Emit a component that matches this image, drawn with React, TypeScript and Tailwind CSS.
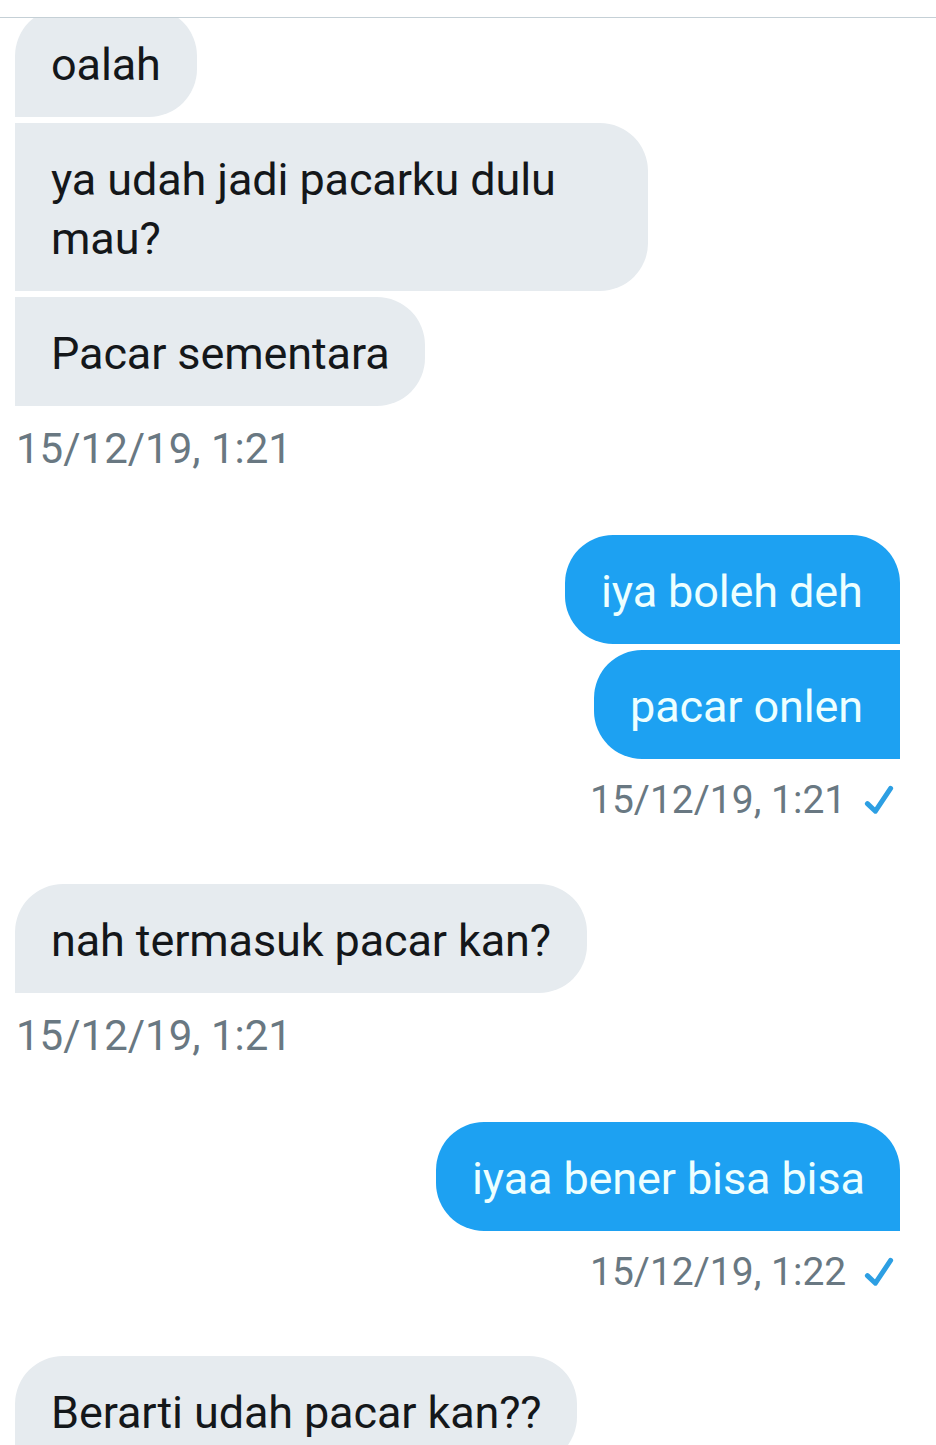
import React from 'react';

type Side = 'in' | 'out';

interface Bubble {
  lines: string[];
  shape: string;
}

interface MessageGroup {
  id: number;
  side: Side;
  bubbles: Bubble[];
  time?: string;
}

const GROUPS: MessageGroup[] = [
  {
    id: 1,
    side: 'in',
    bubbles: [
      { lines: ['oalah'], shape: 'w-[182px] rounded-t-[48px] rounded-br-[48px]' },
      { lines: ['ya udah jadi pacarku dulu', 'mau?'], shape: 'w-[633px] rounded-r-[48px]' },
      { lines: ['Pacar sementara'], shape: 'w-[410px] rounded-r-[48px]' },
    ],
    time: '15/12/19, 1:21',
  },
  {
    id: 2,
    side: 'out',
    bubbles: [
      { lines: ['iya boleh deh'], shape: 'w-[335px] rounded-t-[48px] rounded-bl-[48px]' },
      { lines: ['pacar onlen'], shape: 'w-[306px] rounded-l-[48px]' },
    ],
    time: '15/12/19, 1:21',
  },
  {
    id: 3,
    side: 'in',
    bubbles: [
      { lines: ['nah termasuk pacar kan?'], shape: 'w-[572px] rounded-t-[48px] rounded-br-[48px]' },
    ],
    time: '15/12/19, 1:21',
  },
  {
    id: 4,
    side: 'out',
    bubbles: [
      { lines: ['iyaa bener bisa bisa'], shape: 'w-[464px] rounded-t-[48px] rounded-bl-[48px]' },
    ],
    time: '15/12/19, 1:22',
  },
  {
    id: 5,
    side: 'in',
    bubbles: [
      { lines: ['Berarti udah pacar kan??'], shape: 'w-[562px] rounded-t-[48px] rounded-br-[48px]' },
    ],
  },
];

const SentCheck: React.FC = () => (
  <svg className="w-[30px] h-[30px] shrink-0" viewBox="0 0 30 30" fill="none">
    <path d="M3.4 18.6L11.4 26.2L26.6 3.4" stroke="#2d9fe3" strokeWidth="5" strokeLinecap="round" strokeLinejoin="round" />
  </svg>
);

const MessageBubble: React.FC<{ bubble: Bubble; side: Side }> = ({ bubble, side }) => (
  <div
    className={`shrink-0 px-9 pt-[27px] pb-[23px] text-[45px] leading-[59px] tracking-[-0.12px] whitespace-nowrap ${bubble.shape} ${
      side === 'in' ? 'bg-[#e6ebef] text-[#14171a]' : 'bg-[#1da1f2] text-[#edffff]'
    }`}
  >
    {bubble.lines.map((line) => (
      <p key={line}>{line}</p>
    ))}
  </div>
);

const Group: React.FC<{ group: MessageGroup }> = ({ group }) => (
  <section className={`flex flex-col shrink-0 gap-1.5 ${group.side === 'in' ? 'items-start' : 'items-end'}`}>
    {group.bubbles.map((bubble) => (
      <MessageBubble key={bubble.lines[0]} bubble={bubble} side={group.side} />
    ))}
    {group.time && group.side === 'in' && (
      <time className="mt-3 mb-[62px] pl-px h-[49px] text-[42px] leading-[49px] text-[#697882] whitespace-nowrap">{group.time}</time>
    )}
    {group.time && group.side === 'out' && (
      <div className="mt-3 mb-[61px] pr-1.5 flex items-center h-[46px] w-[310px] justify-between">
        <time className="text-[39px] leading-[46px] text-[#697882] whitespace-nowrap">{group.time}</time>
        <SentCheck />
      </div>
    )}
  </section>
);

const App: React.FC = () => {
  return (
    <div className="w-[936px] h-[1445px] flex flex-col overflow-hidden bg-white font-['Roboto',sans-serif]">
      <header className="h-[18px] shrink-0 border-b border-[#c5d0d6]" />
      {/* the list is scrolled a little, so the first bubble slips under the header */}
      <main className="flex-1 min-h-0 overflow-hidden pl-[15px] pr-9">
        <div className="flex flex-col -mt-2.5">
          {GROUPS.map((group) => (
            <Group key={group.id} group={group} />
          ))}
        </div>
      </main>
    </div>
  );
};

export default App;
